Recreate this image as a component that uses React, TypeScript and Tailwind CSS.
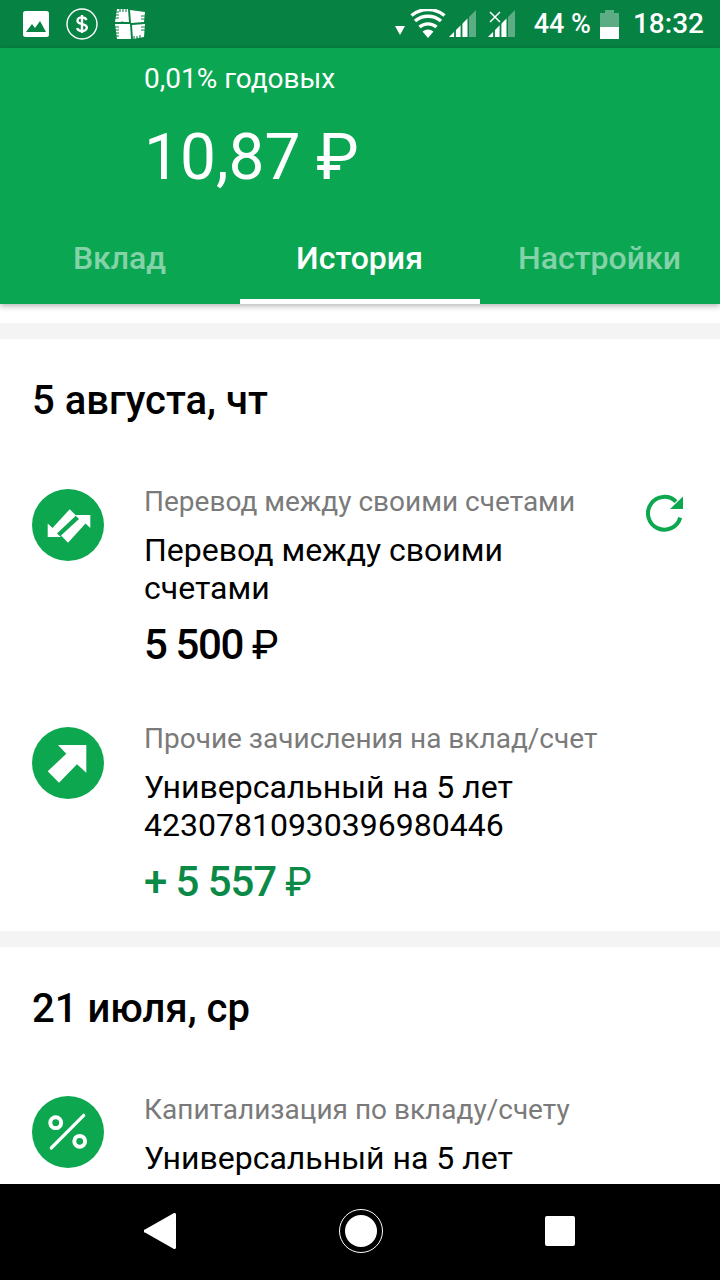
const ROBOTO = "font-['Roboto',sans-serif]";

function StatusIcons() {
  return (
    <div className="flex items-center gap-[17px] pl-[22px]">
      <svg width="28" height="28" viewBox="0 0 28 28">
        <rect x="1" y="1" width="26" height="26" rx="2.500" fill="#fff" />
        <path d="M4 22 L10 14 L13 18 L18 11 L24 22 Z" fill="#068243" />
      </svg>
      <svg width="32" height="32" viewBox="0 0 32 32" fill="none" className="-ml-[1px]">
        <circle cx="16" cy="16" r="15" stroke="#fff" strokeWidth="1.400" />
        <path d="M20.500 12c-.6-1.600-2.300-2.600-4.500-2.600-2.600 0-4.500 1.300-4.500 3.300 0 4.700 9.300 2.300 9.300 6.900 0 2.100-2.100 3.500-4.800 3.500-2.500 0-4.300-1.100-4.900-2.900M16 7v18" stroke="#fff" strokeWidth="2.400" />
      </svg>
      <svg width="32" height="32" viewBox="0 0 32 32" fill="none" className="-ml-[1px]">
        <path d="M3 1h11l1 13H1zM16 2l15 2-1 10-13 1zM1 16h15l1 15H3zM18 17l13-1-1 13-11 2z" fill="#fff" />
        <path d="M1 4h4M1 7h4M1 10h4M0 19h5M0 22h5M0 25h5M0 28h5M27 8h5M27 11h5M27 19h5M27 22h5M6 0v4M9 0v4M12 0v4M20 28v4M23 28v4M26 27v4M7 14l8 1" stroke="#068243" strokeWidth="1.100" />
      </svg>
    </div>
  );
}

function Signal({ cross }: { cross?: boolean }) {
  return (
    <svg width="28" height="30" viewBox="0 0 28 30" fill="none">
      <path d="M20 8 L27 1 V28 H20 Z" fill="#fff" fillOpacity="0.35" />
      <path d="M0 28 L18.500 9.500 V28 Z" fill="#fff" />
      <path d="M6 28V20M12.500 28V14" stroke="#068243" strokeWidth="1.800" />
      {cross && <path d="M2 3 L12 13 M12 3 L2 13" stroke="#fff" strokeWidth="1.500" />}
    </svg>
  );
}

function StatusRight() {
  return (
    <div className="flex items-center pr-[16px]">
      <svg width="10" height="10" viewBox="0 0 10 10" className="mt-[14px]">
        <path d="M0 0 H10 L5 9 Z" fill="#fff" />
      </svg>
      <svg width="36" height="30" viewBox="0 0 36 30" fill="none" className="ml-[5px]">
        <path d="M18 29 L12.500 22.500 a9 9 0 0 1 11 0 Z" fill="#fff" />
        <path d="M9.500 18 a13 13 0 0 1 17 0 M5 12 a20 20 0 0 1 26 0 M1.500 6.500 a26 26 0 0 1 33 0" stroke="#fff" strokeWidth="3.400" />
      </svg>
      <div className="ml-[3px]"><Signal /></div>
      <div className="ml-[11px]"><Signal cross /></div>
      <span className="ml-[18px] text-[27px] leading-[48px] font-medium text-white">44 %</span>
      <div className="ml-[9px] flex h-[29px] w-[19px] flex-col">
        <div className="mx-auto h-[3px] w-[9px] bg-white/35" />
        <div className="h-[14px] w-full bg-white/35" />
        <div className="h-[12px] w-full bg-white" />
      </div>
      <span className="ml-[14px] text-[28px] leading-[48px] font-medium text-white">18:32</span>
    </div>
  );
}

function Tab({ label, active }: { label: string; active?: boolean }) {
  return (
    <div className="flex h-[64px] w-[240px] flex-col items-center justify-between">
      <span className={`-ml-[1px] text-[32px] leading-[36px] font-medium ${active ? "text-white" : "text-white/50"}`}>{label}</span>
      <div className={`h-[5px] w-full ${active ? "bg-white" : ""}`} />
    </div>
  );
}

function TransferIcon() {
  return (
    <svg width="72" height="72" viewBox="0 0 72 72">
      <circle cx="36" cy="36" r="36" fill="#0da750" />
      <path d="M15.700 48 V34.500 L20.500 39 L37.700 20.300 L44 26.500 L25 44.500 L29 48 Z" fill="#fff" />
      <path d="M29 46.500 L47 30 L43 26 H58.300 V39 L53.500 34.500 L36 53.700 Z" fill="#fff" />
    </svg>
  );
}

function ArrowIcon() {
  return (
    <svg width="72" height="72" viewBox="0 0 72 72">
      <circle cx="36" cy="36" r="36" fill="#0da750" />
      <path d="M54.300 18 V45.700 L45 37.300 L27 55.700 L15.700 44.300 L34.300 26.700 L26 18 Z" fill="#fff" />
    </svg>
  );
}

function PercentIcon() {
  return (
    <svg width="72" height="72" viewBox="0 0 72 72" fill="none">
      <circle cx="36" cy="36" r="36" fill="#0da750" />
      <circle cx="23.700" cy="26.700" r="5.400" stroke="#fff" strokeWidth="4" />
      <circle cx="47.700" cy="45.300" r="5.400" stroke="#fff" strokeWidth="4" />
      <path d="M51.700 19.300 L19.300 52" stroke="#fff" strokeWidth="3.200" strokeLinecap="round" />
    </svg>
  );
}

function Refresh() {
  return (
    <svg width="38" height="38" viewBox="0 0 38 38" fill="none">
      <path d="M30 7.700 A16.400 16.400 0 1 0 34.200 23.600" stroke="#0da750" strokeWidth="4" />
      <path d="M37 2.500 V15 H24 Z" fill="#0da750" />
    </svg>
  );
}

interface RowProps {
  icon: React.ReactNode;
  label: string;
  lines: string[];
  amount?: string;
  green?: boolean;
  action?: boolean;
  className?: string;
  iconClass: string;
}

function Row({ icon, label, lines, amount, green, action, className, iconClass }: RowProps) {
  return (
    <div className={`flex ${className ?? ""}`}>
      <div className={`w-[144px] shrink-0 pl-[32px] ${iconClass}`}>{icon}</div>
      <div className="flex-1">
        <p className="text-[28px] leading-[38px] text-[#7a7a7a]">{label}</p>
        <div className="mt-[10px] text-[32px] leading-[38px] text-black">
          {lines.map((l) => (
            <p key={l}>{l}</p>
          ))}
        </div>
        {amount && (
          <p className={`mt-[14px] text-[42px] leading-[48px] font-medium ${green ? "tracking-[-1.1px] text-[#0b8a47]" : "tracking-[-1.4px] text-black"}`}>
            {amount} <span className="font-normal tracking-normal text-[40px]">₽</span>
          </p>
        )}
      </div>
      {action && (
        <div className="w-[74px] shrink-0 pt-[11px]">
          <Refresh />
        </div>
      )}
    </div>
  );
}

export default function App() {
  return (
    <div className={`flex h-[1280px] w-[720px] flex-col overflow-hidden bg-white ${ROBOTO}`}>
      <div className="flex h-[48px] shrink-0 items-center justify-between bg-[#068243]">
        <StatusIcons />
        <StatusRight />
      </div>
      <div className="z-10 h-[256px] shrink-0 bg-[#0aa651] shadow-[0_2px_6px_rgba(0,0,0,0.3)]">
        <p className="pl-[144px] pt-[12px] text-[28px] leading-[38px] text-white">0,01% годовых</p>
        <p className="mt-[18px] pl-[144px] text-[64px] leading-[84px] text-white">10,87 ₽</p>
        <div className="mt-[40px] flex">
          <Tab label="Вклад" />
          <Tab label="История" active />
          <Tab label="Настройки" />
        </div>
      </div>
      <div className="mt-[19px] flex-1 overflow-hidden bg-[#f4f4f4] pt-[16px]">
        <section className="h-[592px] bg-white">
          <h2 className="pl-[32px] pt-[37px] text-[40px] leading-[50px] font-medium text-black">5 августа, чт</h2>
          <Row className="mt-[57px]" iconClass="pt-[6px]" icon={<TransferIcon />} label="Перевод между своими счетами" lines={["Перевод между своими", "счетами"]} amount="5 500" action />
          <Row className="mt-[50px]" iconClass="pt-[7px]" icon={<ArrowIcon />} label="Прочие зачисления на вклад/счет" lines={["Универсальный на 5 лет", "42307810930396980446"]} amount="+ 5 557" green />
        </section>
        <section className="mt-[16px] h-[300px] bg-white">
          <h2 className="pl-[32px] pt-[37px] text-[40px] leading-[50px] font-medium text-black">21 июля, ср</h2>
          <Row className="mt-[57px]" iconClass="pt-[5px]" icon={<PercentIcon />} label="Капитализация по вкладу/счету" lines={["Универсальный на 5 лет"]} />
        </section>
      </div>
      <div className="z-10 flex h-[96px] shrink-0 items-center bg-black">
        <div className="flex w-full items-center justify-between pb-[2px] pl-[144px] pr-[145px]">
          <svg width="32" height="38" viewBox="0 0 32 38">
            <path d="M30 1 a1.500 1.500 0 0 1 2 1.500 V35.500 a1.500 1.500 0 0 1 -2 1.500 L1 20.500 a1.500 1.500 0 0 1 0 -3 Z" fill="#fff" />
          </svg>
          <div className="flex h-[44px] w-[44px] items-center justify-center rounded-full border-[1.5px] border-white">
            <div className="h-[32px] w-[32px] rounded-full bg-white" />
          </div>
          <div className="h-[30px] w-[30px] rounded-[2px] bg-white" />
        </div>
      </div>
    </div>
  );
}
